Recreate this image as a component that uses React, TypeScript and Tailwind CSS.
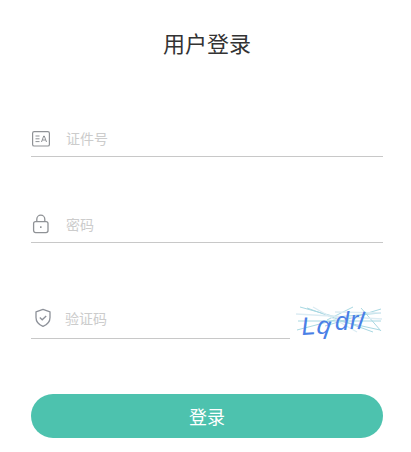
function IdIcon() {
  return (
    <svg width="20" height="18" viewBox="0 0 20 18" fill="none" stroke="#8f9296" strokeWidth="1.2">
      <rect x="1.6" y="1.6" width="16.8" height="14.4" rx="1.6" />
      <path d="M4.5 6h4M4.5 8.8h4M4.5 11.6h4" strokeWidth="1" />
      <path d="M10.5 12l2.2-6h.6l2.2 6M11.4 10h3.2" strokeWidth="1" />
    </svg>
  );
}

function LockIcon() {
  return (
    <svg width="18" height="20" viewBox="0 0 18 20" fill="none" stroke="#8f9296" strokeWidth="1.3">
      <rect x="1.6" y="7.6" width="14.4" height="11" rx="2" />
      <path d="M4.8 7.6V5.2a4 4 0 0 1 8 0v2.4" />
      <path d="M8.8 12.2v1.8" strokeWidth="1.5" />
    </svg>
  );
}

function ShieldIcon() {
  return (
    <svg width="18" height="20" viewBox="0 0 18 20" fill="none" stroke="#8d9199" strokeWidth="1.3">
      <path d="M9 1.4l7 2.4v5.6c0 4.2-2.8 7.2-7 9-4.2-1.8-7-4.8-7-9V3.8z" strokeLinejoin="round" />
      <path d="M5.8 9.6l2.4 2.2 4-3.8" />
    </svg>
  );
}

function Captcha() {
  return (
    <svg width="88" height="34" viewBox="0 0 88 34" className="shrink-0">
      <g stroke="#a8d8e2" strokeWidth="1" fill="none">
        <path d="M5 2l36 10 45-4" />
        <path d="M2 25l38-10 45 10" />
        <path d="M12 3l66 24" />
        <path d="M30 21l56-17" />
        <path d="M3 16h83" />
        <path d="M58 2l-26 13" />
        <path d="M66 3l20 23" />
      </g>
      <g stroke="#dcecf3" strokeWidth="1.4" fill="none">
        <path d="M1 9l86 5" />
        <path d="M18 2l44 25" />
        <path d="M40 7l46 1" />
      </g>
      <g fill="#4a7fe6" fontFamily="'Liberation Sans', sans-serif" fontStyle="italic" fontSize="25">
        <text x="7" y="30" transform="rotate(-4 7 30)">L</text>
        <text x="21" y="28" transform="rotate(8 21 28)">q</text>
        <text x="40" y="25">d</text>
        <text x="55" y="24">r</text>
        <text x="62" y="24" transform="rotate(8 62 24)">l</text>
      </g>
    </svg>
  );
}

export default function App() {
  return (
    <div className="h-[452px] w-[411px] bg-white px-[31px] font-['Noto_Sans_CJK_SC','Liberation_Sans',sans-serif]">
      <div className="w-[352px]">
        <h1 className="pt-[26px] text-center text-[22px] leading-[32px] font-normal text-[#333333]">用户登录</h1>

        <div className="mt-[64px] flex h-[35px] items-center border-b border-[#c8c8c8]">
          <IdIcon />
          <span className="ml-[15px] pb-[2px] text-sm text-[#cccccc]">证件号</span>
        </div>

        <div className="mt-[51px] flex h-[35px] items-center border-b border-[#c8c8c8] pb-[2px]">
          <div className="ml-px"><LockIcon /></div>
          <span className="ml-[16px] text-sm text-[#cccccc]">密码</span>
        </div>

        <div className="mt-[57px] flex items-end gap-[5px]">
          <div className="flex h-[39px] flex-1 items-center border-b border-[#c8c8c8] pb-[2px]">
            <div className="ml-[3px]"><ShieldIcon /></div>
            <span className="ml-[13px] text-sm text-[#cccccc]">验证码</span>
          </div>
          <Captcha />
        </div>

        <button className="mt-[55px] block h-[44px] w-[352px] rounded-[22px] bg-[#4dc2ae] text-lg text-white">登录</button>
      </div>
    </div>
  );
}
